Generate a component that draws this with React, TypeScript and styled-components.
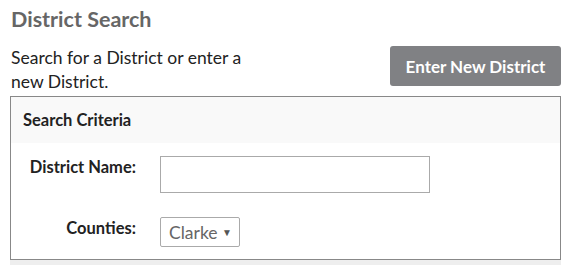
import React from "react";
import styled, { createGlobalStyle } from "styled-components";

const Global = createGlobalStyle`
  html, body { margin: 0; padding: 0; background: #fff; }
  body { font-family: Lato, "Open Sans", sans-serif; color: #222; }
  * { box-sizing: border-box; }
`;

const Page = styled.div`
  width: 551px;
  margin-left: 10px;
  padding-top: 6px;
`;

const Title = styled.h2`
  margin: 0;
  font-size: 21.5px;
  line-height: 26px;
  font-weight: 700;
  color: #666;
  padding-left: 1px;
`;

const TopRow = styled.div`
  display: flex;
  justify-content: space-between;
  align-items: flex-start;
  margin-top: 10px;
`;

const Description = styled.p`
  margin: 0;
  width: 255px;
  padding-top: 4px;
  font-size: 17.5px;
  line-height: 24px;
  padding-left: 1px;
  color: #222;
`;

const Button = styled.button`
  height: 40px;
  width: 171px;
  margin-top: 4px;
  border: none;
  border-radius: 3px;
  background: #808184;
  color: #fff;
  font-family: inherit;
  font-size: 17px;
  font-weight: 700;
  cursor: pointer;
`;

const Panel = styled.section`
  margin-top: 2px;
  border: 1px solid #888;
`;

const PanelHeader = styled.div`
  height: 46px;
  background: #f9f9f9;
  display: flex;
  align-items: center;
  padding-left: 12px;
  font-size: 16.5px;
  font-weight: 700;
  color: #222;
`;

const PanelBody = styled.div`
  display: grid;
  grid-template-columns: 125px auto;
  column-gap: 24px;
  row-gap: 24px;
  padding: 13px 0 12px 0;
  justify-content: start;
`;

const Label = styled.label<{ $top: number }>`
  text-align: right;
  font-size: 16.5px;
  line-height: 22px;
  font-weight: 700;
  color: #222;
  padding-top: ${(p) => p.$top}px;
`;

const TextInput = styled.input`
  width: 270px;
  height: 37px;
  border: 1px solid #aaa;
  border-radius: 0;
  padding: 0 8px;
  font-family: inherit;
  font-size: 16px;
`;

const Select = styled.div`
  width: 80px;
  height: 30px;
  border: 1px solid #aaa;
  border-radius: 2px;
  display: flex;
  align-items: center;
  justify-content: space-between;
  padding: 0 7px 0 8px;
  font-size: 17.5px;
  color: #666;
`;

const Arrow = styled.span`
  font-size: 10px;
  color: #555;
`;

const Footer = styled.div`
  height: 10px;
  background: #eee;
`;

export default function App() {
  return (
    <>
      <Global />
      <Page>
        <Title>District Search</Title>
        <TopRow>
          <Description>Search for a District or enter a new District.</Description>
          <Button>Enter New District</Button>
        </TopRow>
        <Panel>
          <PanelHeader>Search Criteria</PanelHeader>
          <PanelBody>
            <Label $top={0}>District Name:</Label>
            <TextInput type="text" />
            <Label $top={-1}>Counties:</Label>
            <Select>
              <span>Clarke</span>
              <Arrow>▼</Arrow>
            </Select>
          </PanelBody>
        </Panel>
        <Footer />
      </Page>
    </>
  );
}
